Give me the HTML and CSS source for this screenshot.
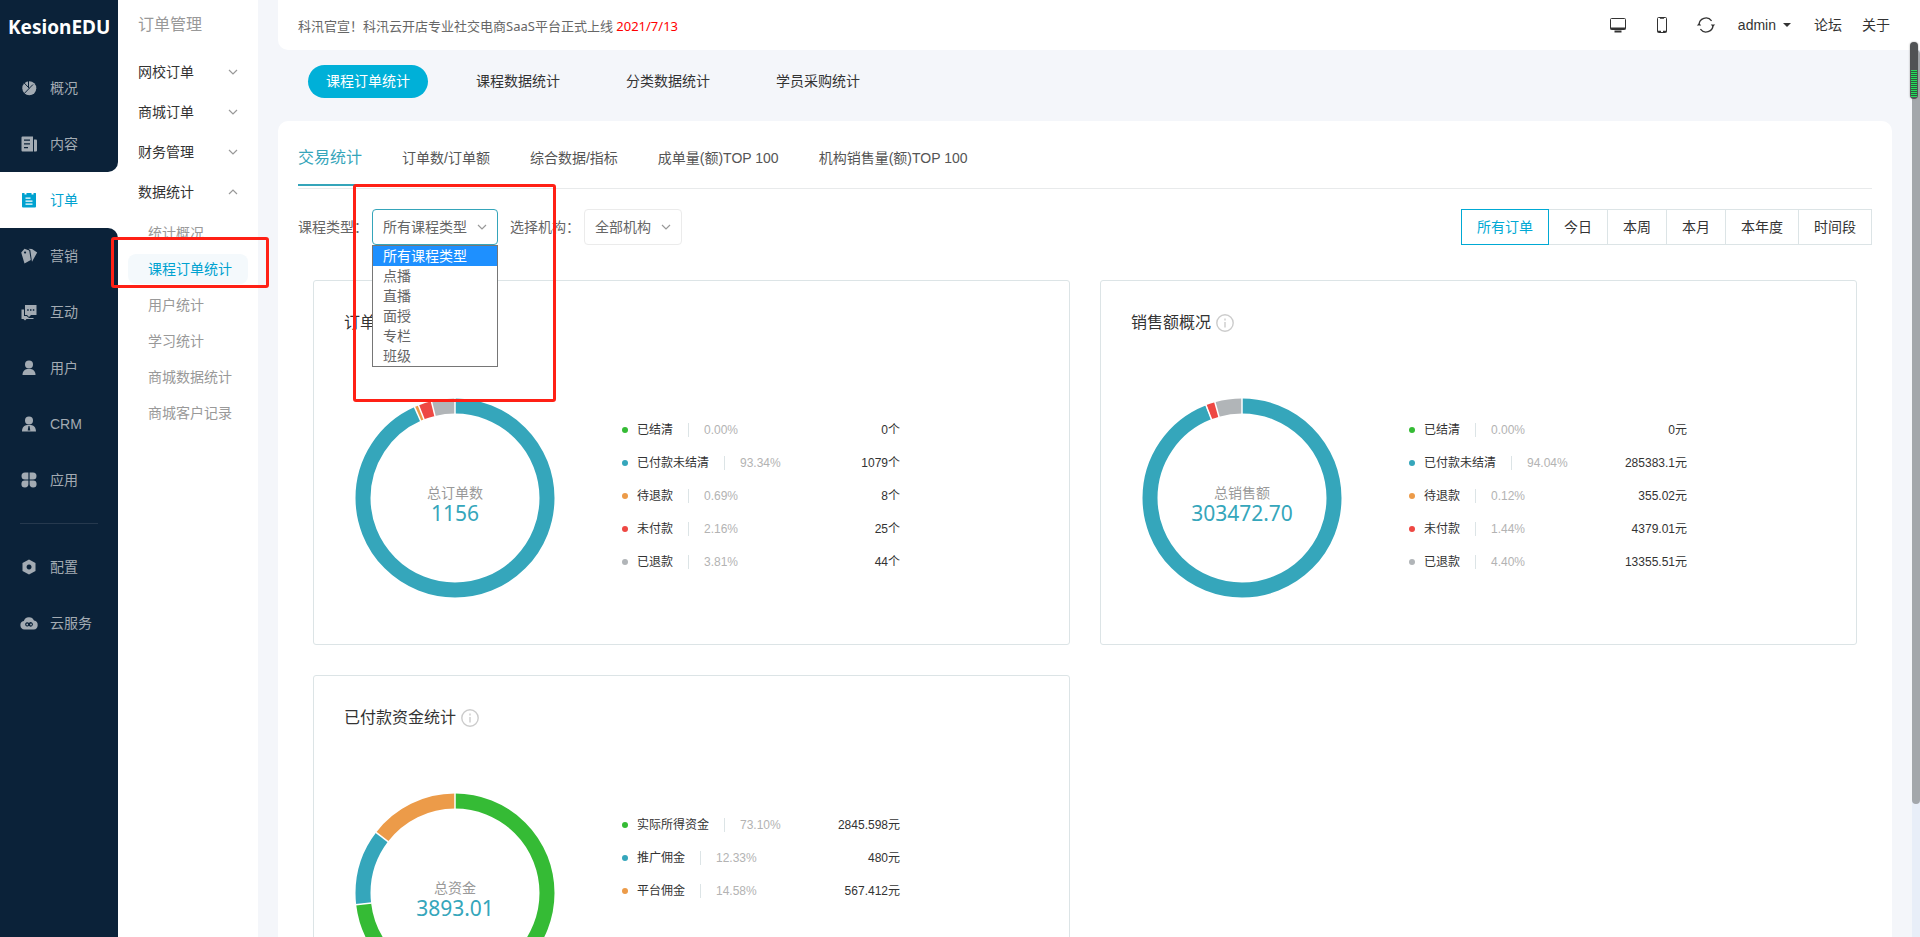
FILE: index.html
```html
<!DOCTYPE html>
<html lang="zh-CN">
<head>
<meta charset="utf-8">
<title>KesionEDU 课程订单统计</title>
<link rel="stylesheet" href="styles.css">
</head>
<body>
<div class="shell">
  <nav class="nav" aria-label="主导航">
    <a class="logo" href="#">KesionEDU</a>
    <a class="nav-item" href="#"><svg class="nav-icon" viewBox="0 0 18 18"><circle cx="9.300" cy="9.300" r="7"/><path class="nav-line" d="M8.500 1.500v7M3 2.800l6.300 6.500-6 6.200M9 9.500l4-4"/></svg>概况</a>
    <a class="nav-item nav-before" href="#"><svg class="nav-icon" viewBox="0 0 18 18"><path fill-rule="evenodd" d="M2.500 1.500h10.500v15H2.500a1 1 0 0 1-1-1v-13a1 1 0 0 1 1-1zM4 4.500v1.200h6V4.500zM4 8.200v1.200h6V8.200zM4 12v1.200h4V12z"/><path d="M14 4.500h2a1 1 0 0 1 1 1v10a1 1 0 0 1-1 1h-2z"/></svg>内容</a>
    <a class="nav-item nav-active" href="#"><svg class="nav-icon" viewBox="0 0 18 18"><path fill-rule="evenodd" d="M2.500 2H4.500v1.500h2V2h5v1.500h2V2h2a.5.5 0 0 1 .5.5v13a1 1 0 0 1-1 1H3a1 1 0 0 1-1-1v-13a.5.5 0 0 1 .5-.5zM5.500 6.500v1.200h5V6.500zM5.500 9.500v1.200h7V9.500zM5.500 12.500v1.200h7v-1.200z"/></svg>订单</a>
    <a class="nav-item nav-after" href="#"><svg class="nav-icon" viewBox="0 0 18 18"><path fill-rule="evenodd" d="M1.200 5.500 4.500 1.800l4.700 1.700 1.600 9.500L4.500 16.500zM5 4.400a1 1 0 1 0 .1 0z"/><path d="M8.500 1.800 12 2l5.200 3.400-5.200 9.400-1.700-11.600z"/></svg>营销</a>
    <a class="nav-item" href="#"><svg class="nav-icon" viewBox="0 0 18 18"><path fill-rule="evenodd" d="M5 2h11.500v10H11l-2 2-2-2H5zM7.200 6.300v1.500h1.500V6.300zM10 6.300v1.500h1.500V6.300zM12.800 6.300v1.500h1.500V6.300z"/><path d="M1.500 6.500H4V13h2.500l2.500 2h4.500v1H6.500l-1.500 1.500-1.500-1.500h-2z"/></svg>互动</a>
    <a class="nav-item" href="#"><svg class="nav-icon" viewBox="0 0 18 18"><circle cx="9" cy="5.500" r="4"/><path d="M2.500 16c0-4 2.500-5.500 4.500-6h4c2 .5 4.500 2 4.500 6z"/></svg>用户</a>
    <a class="nav-item" href="#"><svg class="nav-icon" viewBox="0 0 18 18"><circle cx="9" cy="5.500" r="4"/><path fill-rule="evenodd" d="M2 16.500c0-4.500 2.500-6 5-6.500h4c2.500.5 5 2 5 6.500zM8.500 11l-.8 4.500h2.600L9.500 11z"/></svg>CRM</a>
    <a class="nav-item" href="#"><svg class="nav-icon" viewBox="0 0 18 18"><path d="M5 1.500h3.400v7H5a3.500 3.500 0 0 1 0-7zM9.600 1.500H13a3.500 3.500 0 0 1 0 7H9.600zM5 9.500h3.400V13A3.500 3.500 0 1 1 5 9.500zM9.600 9.500H13A3.500 3.500 0 1 1 9.600 13z"/></svg>应用</a>
    <div class="nav-split"><hr></div>
    <a class="nav-item" href="#"><svg class="nav-icon" viewBox="0 0 18 18"><path fill-rule="evenodd" d="m9 1.500 6.500 3.500v8L9 16.500 2.500 13V5zM9 6.500a2.500 2.500 0 1 0 .1 0z"/></svg>配置</a>
    <a class="nav-item" href="#"><svg class="nav-icon" viewBox="0 0 18 18"><path fill-rule="evenodd" d="M4.500 15.500A4.300 4.300 0 0 1 3.800 7a5.400 5.400 0 0 1 10.200-.4 4.500 4.500 0 0 1-.3 8.900zM6.800 8.200a2.200 2.200 0 1 0 2.200 3.600 2.200 2.200 0 1 0 0-2.800 2.200 2.200 0 0 0-2.200-.8z"/><circle cx="7.200" cy="10.500" r=".9"/><circle cx="11" cy="10.500" r=".9"/></svg>云服务</a>
    <div class="nav-rest"></div>
  </nav>

  <aside class="submenu">
    <h2 class="submenu-title">订单管理</h2>
    <button class="group" type="button">网校订单<svg class="chev" viewBox="0 0 10 6"><path d="m1 1 4 4 4-4"/></svg></button>
    <button class="group" type="button">商城订单<svg class="chev" viewBox="0 0 10 6"><path d="m1 1 4 4 4-4"/></svg></button>
    <button class="group" type="button">财务管理<svg class="chev" viewBox="0 0 10 6"><path d="m1 1 4 4 4-4"/></svg></button>
    <button class="group" type="button" aria-expanded="true">数据统计<svg class="chev" viewBox="0 0 10 6"><path d="m1 5 4-4 4 4"/></svg></button>
    <div class="sub-list">
      <a class="sub-item" href="#">统计概况</a>
      <a class="sub-item sub-active" href="#">课程订单统计</a>
      <a class="sub-item" href="#">用户统计</a>
      <a class="sub-item" href="#">学习统计</a>
      <a class="sub-item" href="#">商城数据统计</a>
      <a class="sub-item" href="#">商城客户记录</a>
    </div>
  </aside>

  <div class="main">
    <header class="topbar">
      <p class="notice">科汛官宣<span class="punct">！</span>科汛云开店专业社交电商SaaS平台正式上线 <span class="notice-date">2021/7/13</span></p>
      <div class="tools">
        <button class="tool" type="button" aria-label="电脑端"><svg class="tool-icon" viewBox="0 0 18 18"><rect x="1.500" y="2.500" width="15" height="11" rx="1"/><path d="M1.500 12.500h15M5.500 15.500h7" stroke-width="2"/></svg></button>
        <button class="tool" type="button" aria-label="手机端"><svg class="tool-icon" viewBox="0 0 18 18"><rect x="4.500" y="1.500" width="9" height="15" rx="1"/><path d="M4.500 15.500h3.500M10 15.500h3.500M7 2h4" stroke-width="1.500"/></svg></button>
        <button class="tool" type="button" aria-label="刷新"><svg class="tool-icon" viewBox="0 0 18 18"><path d="M2 9a7 7 0 0 1 12.600-4.200M16 9a7 7 0 0 1-12.600 4.200" stroke-width="1.300"/><path d="M-.2 9.500 2.200 7l2 2.500zM13.800 8.500l2 2.500 2.400-2.500z" fill="#333" stroke="none"/></svg></button>
        <button class="user" type="button">admin<span class="caret"></span></button>
        <a class="top-link" href="#">论坛</a>
        <a class="top-link" href="#">关于</a>
      </div>
    </header>

    <div class="body">
      <div class="scroll">
        <nav class="pills" aria-label="统计分类">
          <a class="pill pill-on" href="#">课程订单统计</a>
          <a class="pill" href="#">课程数据统计</a>
          <a class="pill" href="#">分类数据统计</a>
          <a class="pill" href="#">学员采购统计</a>
        </nav>

        <main class="panel">
          <nav class="tabs" aria-label="交易统计">
            <a class="tab tab-on" href="#">交易统计</a>
            <a class="tab" href="#">订单数/订单额</a>
            <a class="tab" href="#">综合数据/指标</a>
            <a class="tab" href="#">成单量(额)TOP 100</a>
            <a class="tab" href="#">机构销售量(额)TOP 100</a>
          </nav>

          <div class="filters">
            <div class="field">
              <label for="course-type">课程类型<span class="punct">：</span></label>
              <div class="picker">
                <select class="select select-open" id="course-type">
                  <option>所有课程类型</option><option>点播</option><option>直播</option><option>面授</option><option>专栏</option><option>班级</option>
                </select>
                <svg class="chev picker-chev" viewBox="0 0 10 6"><path d="m1 1 4 4 4-4"/></svg>
                <ul class="options">
                  <li class="option option-on">所有课程类型</li>
                  <li class="option">点播</li>
                  <li class="option">直播</li>
                  <li class="option">面授</li>
                  <li class="option">专栏</li>
                  <li class="option">班级</li>
                </ul>
              </div>
            </div>
            <div class="field">
              <label for="org">选择机构<span class="punct">：</span></label>
              <div class="picker">
                <select class="select" id="org"><option>全部机构</option></select>
                <svg class="chev picker-chev" viewBox="0 0 10 6"><path d="m1 1 4 4 4-4"/></svg>
              </div>
            </div>
            <div class="range">
              <button class="range-btn range-on" type="button">所有订单</button>
              <button class="range-btn" type="button">今日</button>
              <button class="range-btn" type="button">本周</button>
              <button class="range-btn" type="button">本月</button>
              <button class="range-btn" type="button">本年度</button>
              <button class="range-btn" type="button">时间段</button>
            </div>
          </div>

          <div class="cards">
            <section class="card">
              <h3 class="card-title">订单概况<svg class="info" viewBox="0 0 18 18"><circle cx="9" cy="9" r="8.200"/><path d="M9 4.500v2M9 8v5.500"/></svg></h3>
              <div class="card-body">
                <div class="donut">
                  <svg class="ring" viewBox="0 0 200 200">
                    <g transform="rotate(-90 100 100)">
                      <circle class="teal" cx="100" cy="100" r="92" pathLength="100" stroke-dasharray="93.340 100"/>
                      <circle class="orange" cx="100" cy="100" r="92" pathLength="100" stroke-dasharray=".690 100" stroke-dashoffset="-93.340"/>
                      <circle class="red" cx="100" cy="100" r="92" pathLength="100" stroke-dasharray="2.160 100" stroke-dashoffset="-94.030"/>
                      <circle class="grey" cx="100" cy="100" r="92" pathLength="100" stroke-dasharray="3.810 100" stroke-dashoffset="-96.190"/>
                    </g>
                    <path class="cut" d="M100 0v16"/>
                    <path class="cut" d="M100 0v16" transform="rotate(336 100 100)"/>
                    <path class="cut" d="M100 0v16" transform="rotate(338.500 100 100)"/>
                    <path class="cut" d="M100 0v16" transform="rotate(346.300 100 100)"/>
                  </svg>
                  <div class="total"><span class="total-name">总订单数</span><span class="total-num">1156</span></div>
                </div>
                <ul class="legend">
                  <li class="row"><i class="dot dot-green"></i><span class="name">已结清</span><span class="pct">0.00%</span><span class="val">0个</span></li>
                  <li class="row"><i class="dot dot-teal"></i><span class="name">已付款未结清</span><span class="pct">93.34%</span><span class="val">1079个</span></li>
                  <li class="row"><i class="dot dot-orange"></i><span class="name">待退款</span><span class="pct">0.69%</span><span class="val">8个</span></li>
                  <li class="row"><i class="dot dot-red"></i><span class="name">未付款</span><span class="pct">2.16%</span><span class="val">25个</span></li>
                  <li class="row"><i class="dot dot-grey"></i><span class="name">已退款</span><span class="pct">3.81%</span><span class="val">44个</span></li>
                </ul>
              </div>
            </section>

            <section class="card">
              <h3 class="card-title">销售额概况<svg class="info" viewBox="0 0 18 18"><circle cx="9" cy="9" r="8.200"/><path d="M9 4.500v2M9 8v5.500"/></svg></h3>
              <div class="card-body">
                <div class="donut">
                  <svg class="ring" viewBox="0 0 200 200">
                    <g transform="rotate(-90 100 100)">
                      <circle class="teal" cx="100" cy="100" r="92" pathLength="100" stroke-dasharray="94.040 100"/>
                      <circle class="red" cx="100" cy="100" r="92" pathLength="100" stroke-dasharray="1.440 100" stroke-dashoffset="-94.160"/>
                      <circle class="grey" cx="100" cy="100" r="92" pathLength="100" stroke-dasharray="4.400 100" stroke-dashoffset="-95.600"/>
                    </g>
                    <path class="cut" d="M100 0v16"/>
                    <path class="cut" d="M100 0v16" transform="rotate(338.800 100 100)"/>
                    <path class="cut" d="M100 0v16" transform="rotate(344.200 100 100)"/>
                  </svg>
                  <div class="total"><span class="total-name">总销售额</span><span class="total-num">303472.70</span></div>
                </div>
                <ul class="legend">
                  <li class="row"><i class="dot dot-green"></i><span class="name">已结清</span><span class="pct">0.00%</span><span class="val">0元</span></li>
                  <li class="row"><i class="dot dot-teal"></i><span class="name">已付款未结清</span><span class="pct">94.04%</span><span class="val">285383.1元</span></li>
                  <li class="row"><i class="dot dot-orange"></i><span class="name">待退款</span><span class="pct">0.12%</span><span class="val">355.02元</span></li>
                  <li class="row"><i class="dot dot-red"></i><span class="name">未付款</span><span class="pct">1.44%</span><span class="val">4379.01元</span></li>
                  <li class="row"><i class="dot dot-grey"></i><span class="name">已退款</span><span class="pct">4.40%</span><span class="val">13355.51元</span></li>
                </ul>
              </div>
            </section>

            <section class="card">
              <h3 class="card-title">已付款资金统计<svg class="info" viewBox="0 0 18 18"><circle cx="9" cy="9" r="8.200"/><path d="M9 4.500v2M9 8v5.500"/></svg></h3>
              <div class="card-body">
                <div class="donut">
                  <svg class="ring" viewBox="0 0 200 200">
                    <g transform="rotate(-90 100 100)">
                      <circle class="green" cx="100" cy="100" r="92" pathLength="100" stroke-dasharray="73.100 100"/>
                      <circle class="teal" cx="100" cy="100" r="92" pathLength="100" stroke-dasharray="12.330 100" stroke-dashoffset="-73.100"/>
                      <circle class="orange" cx="100" cy="100" r="92" pathLength="100" stroke-dasharray="14.570 100" stroke-dashoffset="-85.430"/>
                    </g>
                    <path class="cut" d="M100 0v16"/>
                    <path class="cut" d="M100 0v16" transform="rotate(263.200 100 100)"/>
                    <path class="cut" d="M100 0v16" transform="rotate(307.500 100 100)"/>
                  </svg>
                  <div class="total"><span class="total-name">总资金</span><span class="total-num">3893.01</span></div>
                </div>
                <ul class="legend">
                  <li class="row"><i class="dot dot-green"></i><span class="name">实际所得资金</span><span class="pct">73.10%</span><span class="val">2845.598元</span></li>
                  <li class="row"><i class="dot dot-teal"></i><span class="name">推广佣金</span><span class="pct">12.33%</span><span class="val">480元</span></li>
                  <li class="row"><i class="dot dot-orange"></i><span class="name">平台佣金</span><span class="pct">14.58%</span><span class="val">567.412元</span></li>
                </ul>
              </div>
            </section>
          </div>
        </main>
      </div>
      <div class="track"><div class="thumb"></div></div>
    </div>
  </div>

  <div class="mark mark-menu"></div>
  <div class="mark mark-filter"></div>
  <div class="meter"><div class="meter-bars"></div></div>
</div>
</body>
</html>
```

FILE: styles.css
```css
* { box-sizing: border-box; }

body {
  margin: 0;
  font-family: "Liberation Sans", "Noto Sans CJK SC", sans-serif;
  font-size: 14px;
  line-height: 20px;
  color: #333;
  background: #f4f6fa;
}

a { color: inherit; text-decoration: none; }
ul { list-style: none; margin: 0; padding: 0; }
p, h2, h3 { margin: 0; font-weight: inherit; }
button, select { font: inherit; color: inherit; }
button { background: none; border: 0; padding: 0; cursor: pointer; }
.punct { font-family: "Noto Sans CJK TC", sans-serif; line-height: 1; }

.shell {
  position: relative;
  display: grid;
  grid-template-columns: 118px 140px 1fr;
  height: 100vh;
  overflow: hidden;
}

/* main navigation */
.nav { display: flex; flex-direction: column; background: #fff; color: #a3abb3; }
.logo {
  display: flex; align-items: center;
  height: 60px; padding: 0 0 6px 8px;
  background: #0b2239; color: #fff;
  font: 700 19px/24px "Noto Sans", sans-serif;
}
.nav-item {
  display: flex; align-items: center; gap: 12px;
  height: 56px; padding-left: 20px;
  background: #0b2239;
}
.nav-icon { width: 18px; height: 18px; fill: currentColor; }
.nav-line { fill: none; stroke: #0b2239; stroke-width: 1; }
.nav-before { border-bottom-right-radius: 10px; }
.nav-after { border-top-right-radius: 10px; }
.nav-active { background: #fff; color: #00a2d0; }
.nav-split { background: #0b2239; padding: 15px 20px; }
.nav-split hr { margin: 0; border: 0; height: 1px; background: #26394e; }
.nav-rest { flex: 1; background: #0b2239; }

/* second-level menu */
.submenu { background: #fff; padding: 0 10px; }
.submenu-title { padding: 13px 10px 15px; font-size: 16px; line-height: 24px; color: #999; }
.group {
  display: flex; align-items: center; justify-content: space-between;
  width: 100%; height: 40px; padding: 0 10px;
}
.chev { width: 10px; height: 6px; fill: none; stroke: #999; stroke-width: 1.200; }
.sub-list { display: flex; flex-direction: column; gap: 6px; padding-top: 6px; }
.sub-item { padding: 5px 20px; color: #999; border-radius: 8px; white-space: nowrap; }
.sub-active { background: #f4f9fc; color: #00a2d0; }

/* top bar */
.main { display: flex; flex-direction: column; min-width: 0; min-height: 0; }
.topbar {
  display: flex; align-items: center; justify-content: space-between;
  height: 50px; flex: none; margin-left: 20px; padding: 0 30px 0 20px;
  background: #fff; border-bottom-left-radius: 10px;
}
.notice { padding-top: 2px; font-family: "Noto Sans", "Noto Sans CJK SC", sans-serif; font-size: 13px; color: #666; }
.notice-date { color: #f00; }
.tools { display: flex; align-items: center; }
.tool { display: flex; margin-right: 26px; }
.tool-icon { width: 18px; height: 18px; fill: none; stroke: #333; stroke-width: 1; overflow: visible; }
.user { display: flex; align-items: center; gap: 7px; margin-right: 23px; }
.tool + .user { margin-left: -3px; }
.caret { border: 4px solid transparent; border-top-color: #333; border-bottom: 0; }
.top-link + .top-link { margin-left: 20px; }

/* page body */
.body { display: flex; flex: 1; min-height: 0; }
.scroll { flex: 1; min-width: 0; padding: 15px 20px 30px; overflow-y: auto; scrollbar-width: none; }
.track { width: 8px; background: #e8eef8; }
.thumb { height: 85%; border-radius: 4px; background: #a3a7ab; }

.pills { display: flex; gap: 30px; padding: 0 30px; margin-bottom: 23px; }
.pill { width: 120px; line-height: 33px; border-radius: 17px; text-align: center; }
.pill-on { background: #00b0d8; color: #fff; }

.panel { background: #fff; border-radius: 10px; padding: 0 20px 30px; }
.tabs { display: flex; gap: 40px; height: 68px; padding-bottom: 2px; border-bottom: 1px solid #e8eaeb; }
.tab { display: flex; align-items: center; padding-top: 10px; border-bottom: 2px solid transparent; color: #555; white-space: nowrap; }
.tab-on { font-size: 16px; color: #35a5ba; border-color: #35a5ba; }

.filters { display: flex; gap: 12px; padding: 20px 0 35px; color: #666; }
.field { display: flex; align-items: center; gap: 4px; }
.picker { position: relative; display: flex; }
.select {
  appearance: none;
  height: 36px; padding: 0 30px 0 10px;
  border: 1px solid #ebebeb; border-radius: 4px;
  background: #fff; color: #666; outline: 0;
}
.select-open { border-color: #35a5ba; }
.picker-chev { position: absolute; right: 11px; top: 15px; pointer-events: none; }
.options {
  position: absolute; z-index: 2; top: 100%; left: 0; right: 0;
  border: 1px solid #767676; background: #fff;
}
.option { padding: 0 10px; line-height: 20px; }
.option-on { background: #1e90ff; color: #fff; }

.range { display: flex; margin-left: auto; }
.range-btn { height: 36px; padding: 0 15px; border: 1px solid #dce4e6; color: #333; }
.range-btn + .range-btn { margin-left: -1px; }
.range-on { position: relative; border-color: #00a9d4; color: #00a9d4; }

/* statistic cards */
.cards { display: grid; grid-template-columns: 1fr 1fr; gap: 30px; padding: 0 15px; }
.card { border: 1px solid #dce4e6; border-radius: 3px; padding: 30px 30px 46px; }
.card-title { display: flex; align-items: center; gap: 5px; font-size: 16px; line-height: 24px; }
.info { width: 18px; height: 18px; fill: none; stroke: #ccc; stroke-width: 1.400; }
.card-body { display: flex; align-items: flex-start; gap: 67px; padding: 63px 0 0 11px; }
.donut { display: grid; width: 200px; height: 200px; flex: none; }
.donut > * { grid-area: 1 / 1; }
.ring { width: 200px; height: 200px; fill: none; }
.ring circle { stroke-width: 15; }
.teal { stroke: #35a6bb; }
.orange { stroke: #ec9b49; }
.red { stroke: #ee4843; }
.grey { stroke: #b1b5b8; }
.green { stroke: #35bb35; }
.cut { stroke: #fff; stroke-width: 1.500; }
.total { display: flex; flex-direction: column; align-items: center; justify-content: center; padding-top: 9px; }
.total-name { color: #999; }
.total-num { font-family: "Noto Sans", sans-serif; font-size: 21px; color: #35a6bb; }

.legend { width: 278px; padding-top: 15px; font-size: 12px; }
.row { display: flex; align-items: center; height: 33px; }
.dot { width: 6px; height: 6px; margin-right: 9px; border-radius: 50%; }
.dot-green { background: #35bb35; }
.dot-teal { background: #35a6bb; }
.dot-orange { background: #ec9b49; }
.dot-red { background: #ee4843; }
.dot-grey { background: #b1b5b8; }
.pct { margin-left: 15px; padding-left: 15px; border-left: 1px solid #dce4e6; line-height: 14px; color: #b3b3b3; }
.val { margin-left: auto; }

/* highlight frames and level meter above the page */
.mark { position: absolute; z-index: 3; border: 3px solid #ff2015; border-radius: 3px; pointer-events: none; }
.mark-menu { left: 111px; top: 237px; width: 158px; height: 51px; }
.mark-filter { left: 353px; top: 184px; width: 203px; height: 218px; }
.meter {
  position: absolute; z-index: 3; right: 2px; top: 42px;
  width: 8px; height: 57px; padding: 28px 1px 2px;
  border-radius: 4px; background: #505254; box-shadow: 0 0 2px #999;
}
.meter-bars { height: 27px; background: repeating-linear-gradient(#22dd5c 0 1px, #2d5a3c 1px 2px); }
```
